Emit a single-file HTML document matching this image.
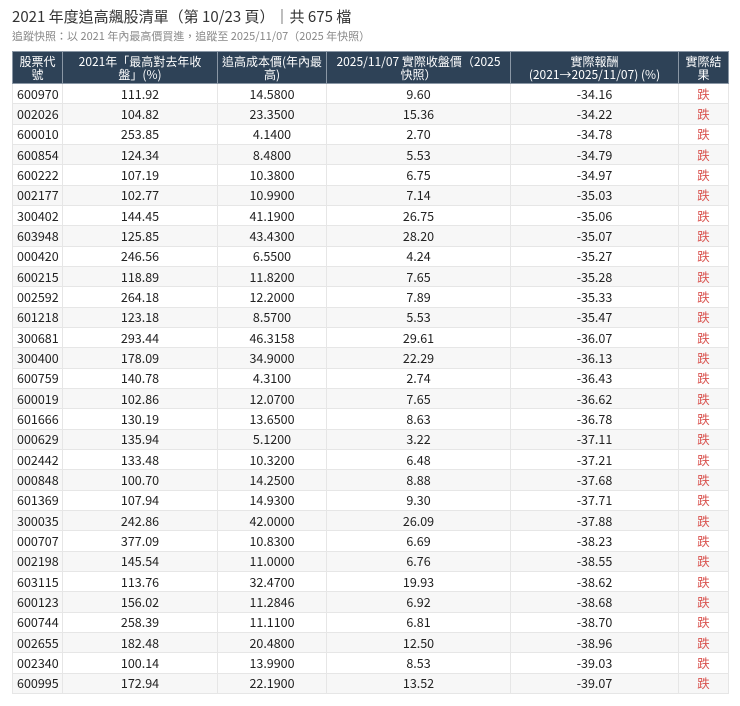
<!DOCTYPE html>
<html><head><meta charset="utf-8"><style>
body{margin:0;background:#fff;font-family:"Noto Sans CJK TC",sans-serif;color:#222}
.t{position:absolute;left:12px;top:6px;font-size:15px;line-height:22px;color:#333;white-space:nowrap}
.s{position:absolute;left:12px;top:29px;font-size:11px;line-height:14px;color:#888;white-space:nowrap}
table{position:absolute;left:12px;top:51px;border-collapse:collapse;table-layout:fixed;width:716px;font-size:12.5px}
th{background:#2e4257;color:#fff;font-weight:normal;height:31px;line-height:13px;padding:0 2px;border:1px solid #8a97a5;font-size:12px;text-align:center;white-space:nowrap;overflow:hidden}
tbody tr{height:20.33px}
td{padding:0 4px;border:1px solid #e6e6e6;text-align:center;line-height:14px;overflow:hidden}
td:first-child{text-align:left}
tr:nth-child(even) td{background:#f7f7f7}
td.r{color:#d9534f}
</style></head><body>
<div class="t">2021 年度追高飆股清單（第 10/23 頁）｜共 675 檔</div>
<div class="s">追蹤快照：以 2021 年內最高價買進，追蹤至 2025/11/07（2025 年快照）</div>
<table>
<colgroup><col style="width:50px"><col style="width:155px"><col style="width:109px"><col style="width:184px"><col style="width:168px"><col style="width:50px"></colgroup>
<thead><tr><th>股票代<br>號</th><th>2021年「最高對去年收<br>盤」(%)</th><th>追高成本價(年內最<br>高)</th><th>2025/11/07 實際收盤價（2025<br>快照）</th><th>實際報酬<br>(2021→2025/11/07) (%)</th><th>實際結<br>果</th></tr></thead>
<tbody>
<tr><td>600970</td><td>111.92</td><td>14.5800</td><td>9.60</td><td>-34.16</td><td class="r">跌</td></tr>
<tr><td>002026</td><td>104.82</td><td>23.3500</td><td>15.36</td><td>-34.22</td><td class="r">跌</td></tr>
<tr><td>600010</td><td>253.85</td><td>4.1400</td><td>2.70</td><td>-34.78</td><td class="r">跌</td></tr>
<tr><td>600854</td><td>124.34</td><td>8.4800</td><td>5.53</td><td>-34.79</td><td class="r">跌</td></tr>
<tr><td>600222</td><td>107.19</td><td>10.3800</td><td>6.75</td><td>-34.97</td><td class="r">跌</td></tr>
<tr><td>002177</td><td>102.77</td><td>10.9900</td><td>7.14</td><td>-35.03</td><td class="r">跌</td></tr>
<tr><td>300402</td><td>144.45</td><td>41.1900</td><td>26.75</td><td>-35.06</td><td class="r">跌</td></tr>
<tr><td>603948</td><td>125.85</td><td>43.4300</td><td>28.20</td><td>-35.07</td><td class="r">跌</td></tr>
<tr><td>000420</td><td>246.56</td><td>6.5500</td><td>4.24</td><td>-35.27</td><td class="r">跌</td></tr>
<tr><td>600215</td><td>118.89</td><td>11.8200</td><td>7.65</td><td>-35.28</td><td class="r">跌</td></tr>
<tr><td>002592</td><td>264.18</td><td>12.2000</td><td>7.89</td><td>-35.33</td><td class="r">跌</td></tr>
<tr><td>601218</td><td>123.18</td><td>8.5700</td><td>5.53</td><td>-35.47</td><td class="r">跌</td></tr>
<tr><td>300681</td><td>293.44</td><td>46.3158</td><td>29.61</td><td>-36.07</td><td class="r">跌</td></tr>
<tr><td>300400</td><td>178.09</td><td>34.9000</td><td>22.29</td><td>-36.13</td><td class="r">跌</td></tr>
<tr><td>600759</td><td>140.78</td><td>4.3100</td><td>2.74</td><td>-36.43</td><td class="r">跌</td></tr>
<tr><td>600019</td><td>102.86</td><td>12.0700</td><td>7.65</td><td>-36.62</td><td class="r">跌</td></tr>
<tr><td>601666</td><td>130.19</td><td>13.6500</td><td>8.63</td><td>-36.78</td><td class="r">跌</td></tr>
<tr><td>000629</td><td>135.94</td><td>5.1200</td><td>3.22</td><td>-37.11</td><td class="r">跌</td></tr>
<tr><td>002442</td><td>133.48</td><td>10.3200</td><td>6.48</td><td>-37.21</td><td class="r">跌</td></tr>
<tr><td>000848</td><td>100.70</td><td>14.2500</td><td>8.88</td><td>-37.68</td><td class="r">跌</td></tr>
<tr><td>601369</td><td>107.94</td><td>14.9300</td><td>9.30</td><td>-37.71</td><td class="r">跌</td></tr>
<tr><td>300035</td><td>242.86</td><td>42.0000</td><td>26.09</td><td>-37.88</td><td class="r">跌</td></tr>
<tr><td>000707</td><td>377.09</td><td>10.8300</td><td>6.69</td><td>-38.23</td><td class="r">跌</td></tr>
<tr><td>002198</td><td>145.54</td><td>11.0000</td><td>6.76</td><td>-38.55</td><td class="r">跌</td></tr>
<tr><td>603115</td><td>113.76</td><td>32.4700</td><td>19.93</td><td>-38.62</td><td class="r">跌</td></tr>
<tr><td>600123</td><td>156.02</td><td>11.2846</td><td>6.92</td><td>-38.68</td><td class="r">跌</td></tr>
<tr><td>600744</td><td>258.39</td><td>11.1100</td><td>6.81</td><td>-38.70</td><td class="r">跌</td></tr>
<tr><td>002655</td><td>182.48</td><td>20.4800</td><td>12.50</td><td>-38.96</td><td class="r">跌</td></tr>
<tr><td>002340</td><td>100.14</td><td>13.9900</td><td>8.53</td><td>-39.03</td><td class="r">跌</td></tr>
<tr><td>600995</td><td>172.94</td><td>22.1900</td><td>13.52</td><td>-39.07</td><td class="r">跌</td></tr>
</tbody></table>
</body></html>
